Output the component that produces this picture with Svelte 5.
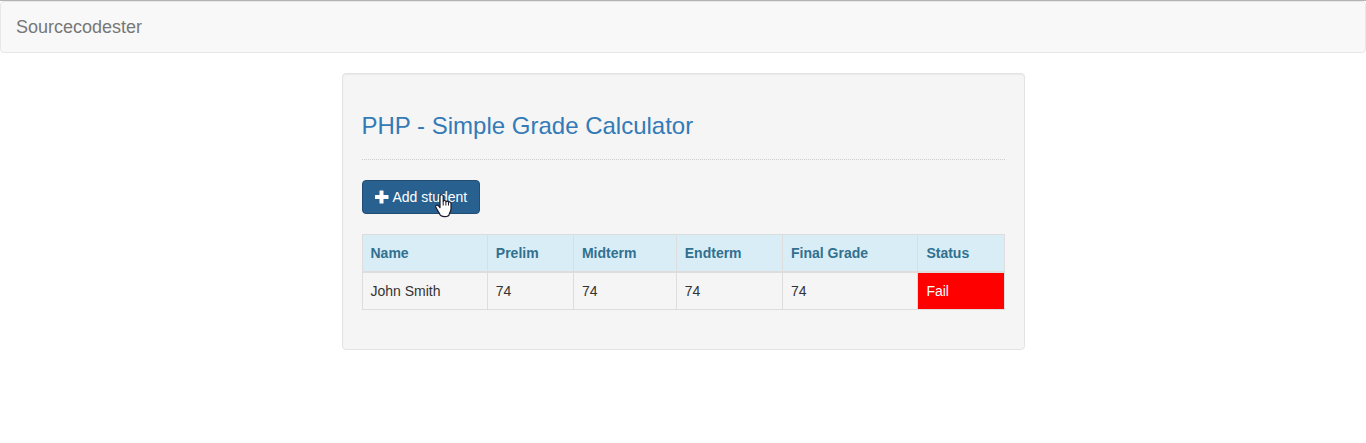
<script>
  const PASSING_GRADE = 75;

  let students = $state([
    { id: 1, name: 'John Smith', prelim: 74, midterm: 74, endterm: 74 }
  ]);

  function finalGrade(student) {
    return Math.round((student.prelim + student.midterm + student.endterm) / 3);
  }

  function hasPassed(student) {
    return finalGrade(student) >= PASSING_GRADE;
  }
</script>

<nav class="navbar">
  <a class="brand" href="#home">Sourcecodester</a>
</nav>

<main class="well">
  <h3>PHP - Simple Grade Calculator</h3>
  <hr />
  <button class="btn-primary" type="button">
    <svg class="icon" viewBox="0 0 14 14" aria-hidden="true">
      <path d="M5 0.500h3q.5 0 .5.5v4H13q.5 0 .5.5v3q0 .5-.5.500H8.500v4q0 .5-.5.5H5q-.5 0-.5-.5V9H.5q-.5 0-.5-.5v-3Q0 5 .5 5h4V1q0-.5.5-.5z" fill="currentColor" />
    </svg>
    <span>Add student</span>
    <svg class="pointer" viewBox="0 0 17 24" aria-hidden="true">
      <path
        d="M5 13.500V2.300C5 .2 8.200.2 8.200 2.300V7.500c.2-1.500 2.600-1.300 2.700.3.300-1.200 2.500-1 2.600.7.400-1.100 2.500-.7 2.500 1v5.300c0 2.500-1.400 3.600-1.800 5.500-.4 2.900-8 3.200-9.300.2C4.200 18.300 2 16 .8 13c-.6-1.700 1.600-2.500 2.700-1.200z"
        fill="#fff"
        stroke="#1b1b2b"
        stroke-width="1.200"
        stroke-linejoin="round"
      />
      <path d="M8.200 7.500v4M10.900 8v3.500M13.500 9v2.500" fill="none" stroke="#1b1b2b" />
    </svg>
  </button>

  <table>
    <thead>
      <tr>
        <th>Name</th>
        <th>Prelim</th>
        <th>Midterm</th>
        <th>Endterm</th>
        <th>Final Grade</th>
        <th>Status</th>
      </tr>
    </thead>
    <tbody>
      {#each students as student (student.id)}
        <tr>
          <td>{student.name}</td>
          <td>{student.prelim}</td>
          <td>{student.midterm}</td>
          <td>{student.endterm}</td>
          <td>{finalGrade(student)}</td>
          <td class={hasPassed(student) ? 'pass' : 'fail'}>{hasPassed(student) ? 'Pass' : 'Fail'}</td>
        </tr>
      {/each}
    </tbody>
  </table>
</main>

<style>
  :global(body) {
    background: #fff;
    color: #333;
    font-family: 'Liberation Sans', Arial, sans-serif;
    font-size: 14px;
    line-height: 20px;
    border-top: 1px solid #b4b4b4;
  }

  .navbar {
    display: flex;
    box-sizing: border-box;
    min-height: 52px;
    margin-bottom: 20px;
    background: #f8f8f8;
    border: 1px solid #e7e7e7;
    border-radius: 4px;
  }

  .brand {
    padding: 15px;
    color: #777;
    font-size: 18px;
    text-decoration: none;
  }

  .well {
    box-sizing: border-box;
    width: 50%;
    margin: 0 auto;
    padding: 19px;
    background: #f5f5f5;
    border: 1px solid #e3e3e3;
    border-radius: 4px;
    box-shadow: inset 0 1px 1px rgba(0, 0, 0, 0.05);
  }

  h3 {
    margin: 20px 0;
    color: #337ab7;
    font-size: 24px;
    font-weight: 500;
    line-height: 26px;
  }

  hr {
    margin: 20px 0;
    border: 0;
    border-top: 1px dotted #ccc;
  }

  .btn-primary {
    position: relative;
    display: flex;
    align-items: center;
    gap: 4px;
    padding: 6px 12px;
    background: #286090;
    border: 1px solid #204d74;
    border-radius: 4px;
    color: #fff;
    font: inherit;
    cursor: pointer;
  }

  .icon {
    width: 14px;
    height: 14px;
  }

  .pointer {
    position: absolute;
    top: 13px;
    right: 27px;
    width: 17px;
    height: 24px;
  }

  table {
    width: 100%;
    margin: 20px 0;
    border: 1px solid #ddd;
    border-collapse: collapse;
  }

  th,
  td {
    padding: 8px;
    border: 1px solid #ddd;
    text-align: left;
  }

  th {
    background: #d9edf7;
    border-bottom-width: 2px;
    color: #31708f;
  }

  .pass,
  .fail {
    color: #fff;
  }

  .pass {
    background: #008000;
  }

  .fail {
    background: #f00;
  }
</style>
